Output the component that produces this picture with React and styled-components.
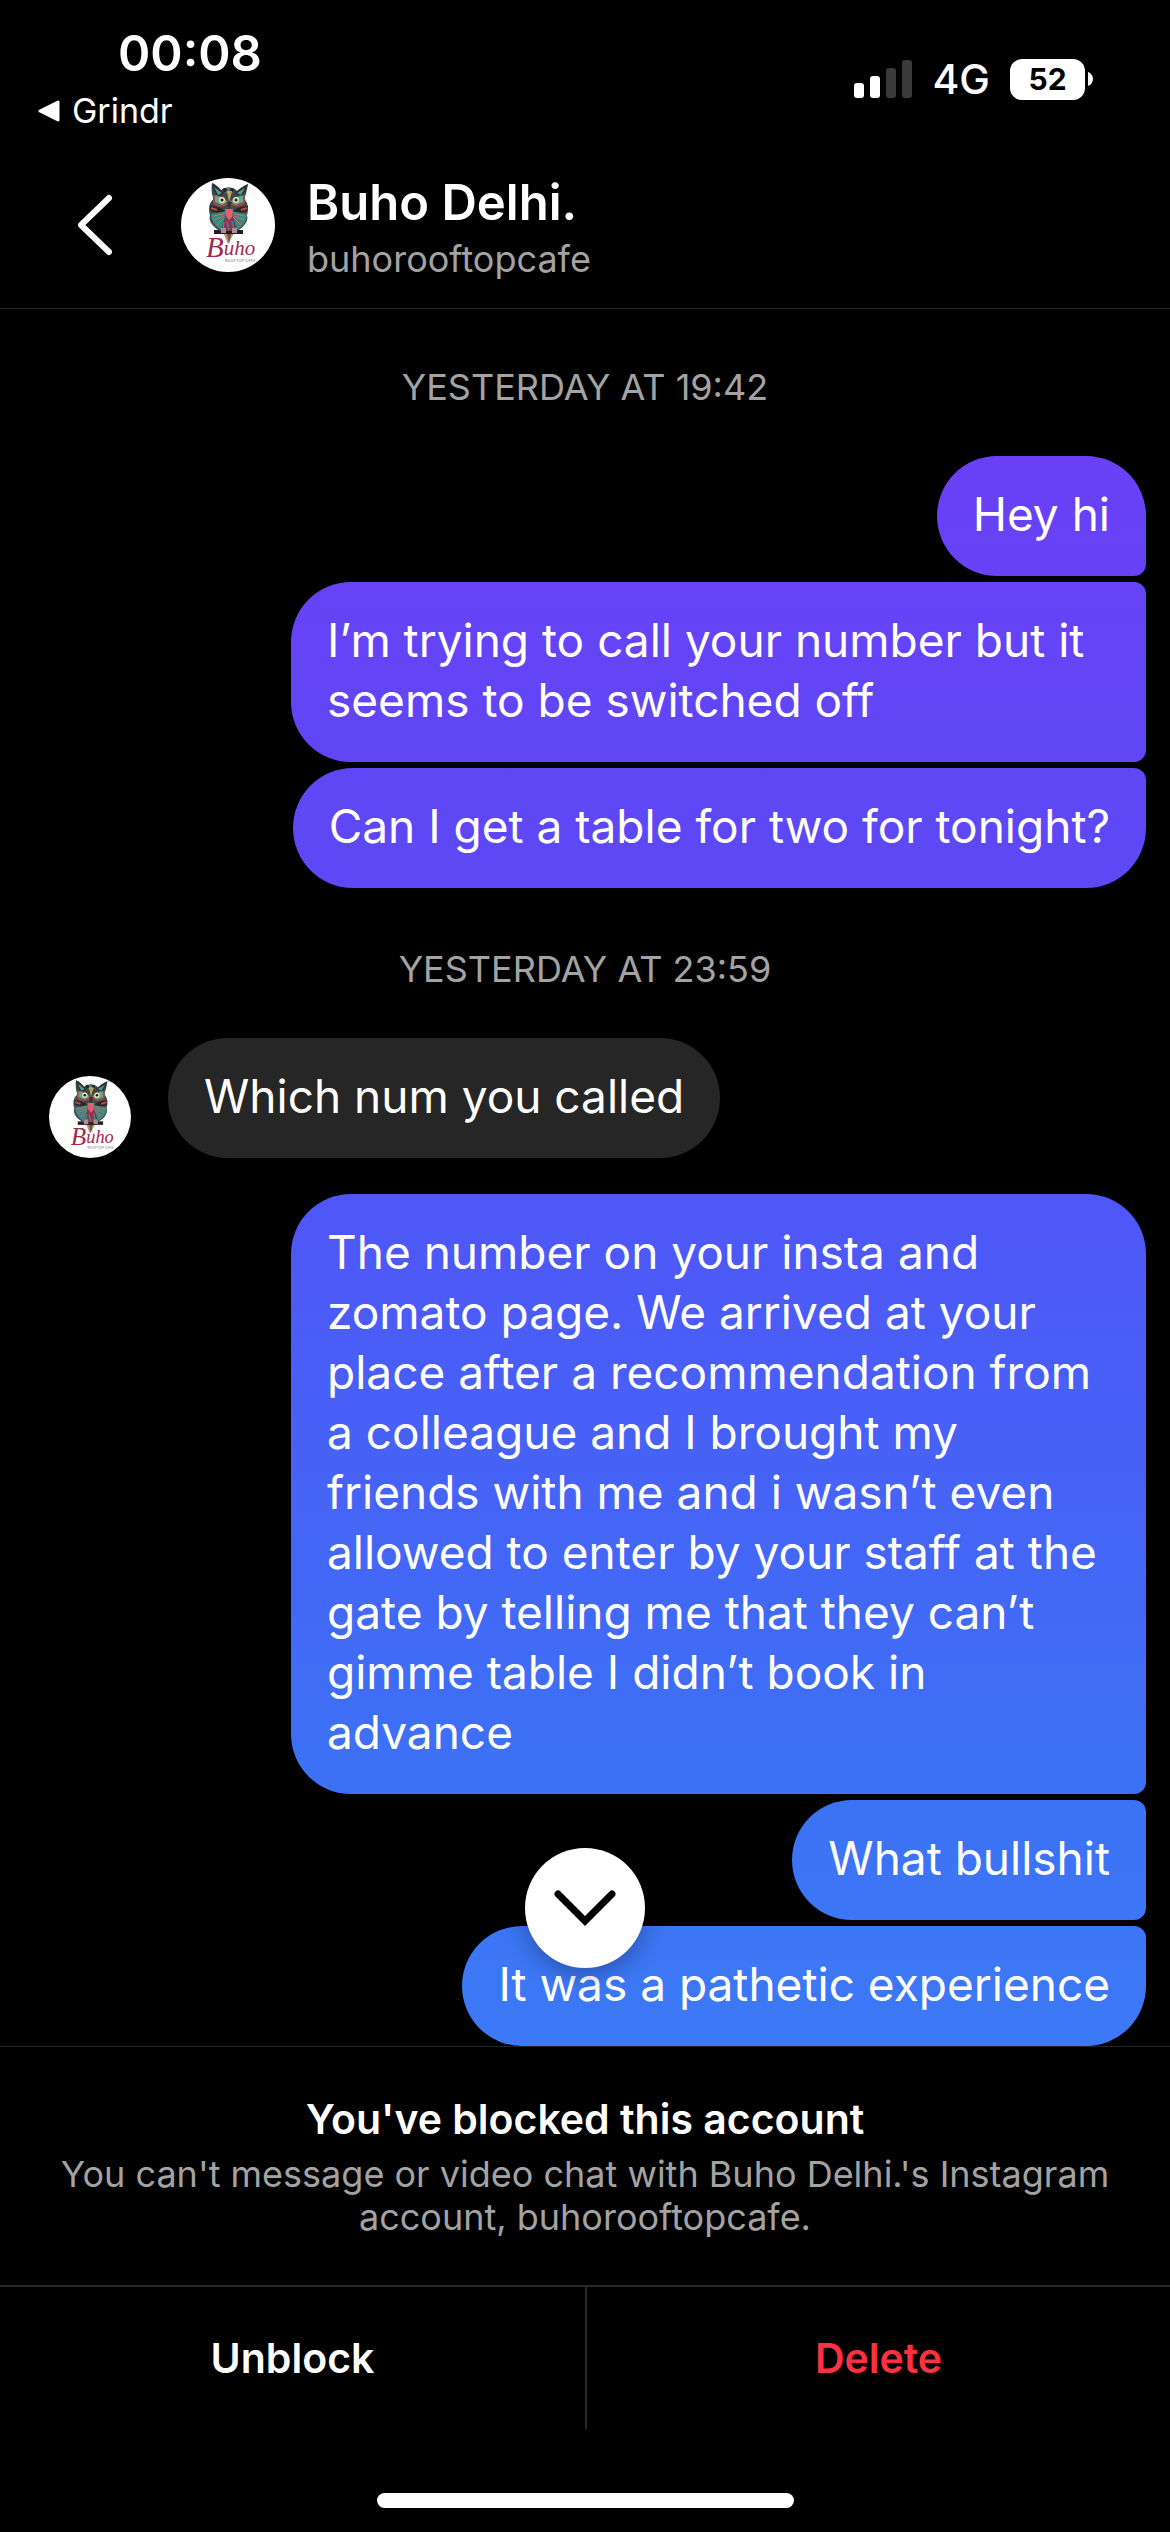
import React from "react";
import styled, { createGlobalStyle } from "styled-components";

const COLORS = {
  black: "#000",
  white: "#fff",
  muted: "#a3a3a3",
  line: "#262626",
  bubble: "#262626",
  dim: "#3a3a3a",
  danger: "#ff3040",
};

const MESSAGES = [
  {
    date: "YESTERDAY AT 19:42",
    groups: [
      {
        own: true,
        texts: [
          "Hey hi",
          "I’m trying to call your number but it seems to be switched off",
          "Can I get a table for two for tonight?",
        ],
      },
    ],
  },
  {
    date: "YESTERDAY AT 23:59",
    groups: [
      { own: false, texts: ["Which num you called"] },
      {
        own: true,
        texts: [
          "The number on your insta and zomato page. We arrived at your place after a recommendation from a colleague and I brought my friends with me and i wasn’t even allowed to enter by your staff at the gate by telling me that they can’t gimme table I didn’t book in\nadvance",
          "What bullshit",
          "It was a pathetic experience",
        ],
      },
    ],
  },
];

const OwlLogo = ({ size }) => (
  <svg width={size} height={size} viewBox="0 0 94 94" aria-hidden="true">
    <circle cx="47" cy="47" r="47" fill="#fff" />
    {/* tail and perch */}
    <path d="M41 52L47 66L55 52Z" fill="#b09a62" />
    <path d="M45 52L48 66L51 52Z" fill="#7a4a55" />
    <path d="M33 52H62V56H33Z" fill="#251c22" />
    {/* body */}
    <path
      d="M31 5C30 13 31 18 33 21C28 24 27 31 29 37C27 43 32 49 39 53H56C63 49 68 43 66 37C68 31 67 24 63 21C65 17 66 12 67 6C62 8 58 11 56 13C54 9 42 8 40 13C38 10 35 7 31 5Z"
      fill="#3b4a4c"
    />
    <path d="M31 5C32 12 34 16 38 19L43 15C39 11 36 7 31 5Z" fill="#2a3237" />
    <path d="M67 6C65 12 63 16 59 19L54 15C58 12 62 8 67 6Z" fill="#2a3237" />
    <path d="M33 9L37 17L41 15Z" fill="#4f9a90" />
    <path d="M64 10L60 17L56 15Z" fill="#4f9a90" />
    <path d="M42 12L48 9L54 12L48 18Z" fill="#5d8062" />
    <circle cx="44" cy="12" r="2" fill="#26212a" />
    <circle cx="51" cy="12" r="2" fill="#26212a" />
    <path d="M46 13L48 24L51 13Z" fill="#c2a45e" />
    <path d="M32 17C37 17 44 18 48 25C44 30 35 30 32 25Z" fill="#9a4a40" />
    <path d="M64 17C59 17 52 18 48 25C52 30 61 30 64 25Z" fill="#9a4a40" />
    <path d="M34 18C39 18 44 20 46 24L41 27L34 24Z" fill="#63a69a" />
    <path d="M62 18C57 18 52 20 50 24L55 27L62 24Z" fill="#63a69a" />
    <circle cx="41" cy="22" r="3" fill="#ece3b4" />
    <circle cx="55" cy="22" r="3" fill="#ece3b4" />
    <circle cx="41" cy="22" r="1.5" fill="#1a1a1f" />
    <circle cx="55" cy="22" r="1.5" fill="#1a1a1f" />
    <path d="M46 24L48 31L51 24Z" fill="#3b2b2b" />
    <path d="M29 28C34 28 41 29 44 34L36 35L30 33Z" fill="#2b2428" />
    <path d="M67 28C62 28 55 29 52 34L60 35L66 33Z" fill="#2b2428" />
    <path d="M30 30L36 32M66 30L60 32" stroke="#b4533f" strokeWidth="2" />
    <path d="M30 36L46 33L40 52C34 48 30 43 30 36Z" fill="#3f8580" />
    <path d="M66 36L50 33L56 52C62 48 66 43 66 36Z" fill="#3f8580" />
    <path
      d="M32 38L43 36M33 42L43 38M36 47L44 39M64 38L53 36M63 42L53 38M60 47L52 39"
      stroke="#bb7a5a"
      strokeWidth="1"
    />
    <path d="M41 53L44 39L48 35L52 39L55 53Z" fill="#8d3554" />
    <path d="M44 31H52L51 39L48 42L45 38Z" fill="#e0606f" />
    <path d="M46 44L48 52M51 43L53 51M43 44L42 51" stroke="#4f9a90" />
    <path d="M40 50H45V55H40ZM51 50H56V55H51Z" fill="#a98f93" />
    <text
      x="25"
      y="79"
      fill="#a3284c"
      fontFamily="'Liberation Serif', serif"
      fontStyle="italic"
      fontSize="29"
    >
      B
      <tspan y="77" fontSize="21">
        uho
      </tspan>
    </text>
    <text
      x="44"
      y="84"
      fill="#777"
      fontFamily="Inter, sans-serif"
      fontSize="4"
    >
      ROOFTOP CAFE
    </text>
  </svg>
);

const StatusBar = () => (
  <Status>
    <StatusLeft>
      <Time>00:08</Time>
      <ReturnLink href="#">
        <svg width="22" height="22" viewBox="0 0 22 22" aria-hidden="true">
          <path
            d="M2 11L20 2V20Z"
            fill="#fff"
            stroke="#fff"
            strokeWidth="3"
            strokeLinejoin="round"
          />
        </svg>
        Grindr
      </ReturnLink>
    </StatusLeft>
    <StatusRight>
      <svg width="58" height="38" viewBox="0 0 58 38" aria-hidden="true">
        <rect x="0" y="23" width="10" height="15" rx="3" fill={COLORS.white} />
        <rect x="16" y="16" width="10" height="22" rx="3" fill={COLORS.white} />
        <rect x="32" y="8" width="10" height="30" rx="3" fill={COLORS.dim} />
        <rect x="48" y="0" width="10" height="38" rx="3" fill={COLORS.dim} />
      </svg>
      <Network>4G</Network>
      <Battery>
        <BatteryLevel>52</BatteryLevel>
        <svg width="5" height="14" viewBox="0 0 5 14" aria-hidden="true">
          <path d="M0 0C3 1 5 4 5 7C5 10 3 13 0 14Z" fill="#fff" />
        </svg>
      </Battery>
    </StatusRight>
  </Status>
);

const App = () => {
  return (
    <>
      <GlobalStyle />
      <Page>
        <StatusBar />
        <Header>
          <IconButton aria-label="Back">
            <svg width="40" height="66" viewBox="0 0 40 66" fill="none">
              <path
                d="M34 6L6 33L34 60"
                stroke="#fff"
                strokeWidth="6"
                strokeLinecap="round"
                strokeLinejoin="round"
              />
            </svg>
          </IconButton>
          <OwlLogo size={94} />
          <Account>
            <Name>Buho Delhi.</Name>
            <Username>buhorooftopcafe</Username>
          </Account>
        </Header>

        <Thread>
          {MESSAGES.map(({ date, groups }) => (
            <Section key={date}>
              <DateLabel>{date}</DateLabel>
              {groups.map(({ own, texts }) => (
                <Group key={texts[0]} $own={own}>
                  {!own && <OwlLogo size={82} />}
                  <Bubbles $own={own}>
                    {texts.map((text) => (
                      <Bubble key={text} $own={own}>
                        {text}
                      </Bubble>
                    ))}
                  </Bubbles>
                </Group>
              ))}
            </Section>
          ))}
          <ScrollButton aria-label="Scroll to latest">
            <svg width="70" height="44" viewBox="0 0 70 44" fill="none">
              <path
                d="M8 8L35 35L62 8"
                stroke="#000"
                strokeWidth="7"
                strokeLinecap="round"
              />
            </svg>
          </ScrollButton>
        </Thread>

        <Footer>
          <Notice>
            <NoticeTitle>You've blocked this account</NoticeTitle>
            <NoticeText>
              You can't message or video chat with Buho Delhi.'s Instagram
              account, buhorooftopcafe.
            </NoticeText>
          </Notice>
          <Actions>
            <ActionButton>Unblock</ActionButton>
            <ActionButton $danger>Delete</ActionButton>
          </Actions>
          <HomeIndicator />
        </Footer>
      </Page>
    </>
  );
};

const GlobalStyle = createGlobalStyle`
  *, *::before, *::after {
    box-sizing: border-box;
  }
  body {
    margin: 0;
    background: ${COLORS.black};
    color: ${COLORS.white};
    font-family: Inter, "Liberation Sans", sans-serif;
  }
  h1, h2, p {
    margin: 0;
  }
  svg {
    display: block;
    flex-shrink: 0;
  }
`;

const Page = styled.div`
  display: flex;
  flex-direction: column;
  min-height: 100vh;
`;

const Status = styled.div`
  display: flex;
  justify-content: space-between;
  align-items: flex-start;
  padding: 24px 77px 0 38px;
`;

const StatusLeft = styled.div`
  display: flex;
  flex-direction: column;
`;

const Time = styled.span`
  padding-left: 80px;
  font-size: 49px;
  line-height: 60px;
  font-weight: 600;
`;

const ReturnLink = styled.a`
  display: flex;
  align-items: center;
  gap: 12px;
  color: ${COLORS.white};
  font-size: 34px;
  line-height: 54px;
  text-decoration: none;
`;

const StatusRight = styled.div`
  display: flex;
  align-items: center;
  padding-top: 33px;
`;

const Network = styled.span`
  padding: 0 20px;
  font-size: 41px;
  line-height: 44px;
  font-weight: 500;
`;

const Battery = styled.div`
  display: flex;
  align-items: center;
  gap: 3px;
`;

const BatteryLevel = styled.span`
  width: 75px;
  border-radius: 12px;
  background: ${COLORS.white};
  color: ${COLORS.black};
  font-size: 30px;
  line-height: 41px;
  font-weight: 700;
  text-align: center;
`;

const Header = styled.header`
  display: flex;
  align-items: center;
  padding: 31px 75px 27px;
  border-bottom: 1px solid ${COLORS.line};
`;

const UnstyledButton = styled.button`
  display: block;
  padding: 0;
  border: none;
  background: transparent;
  color: inherit;
  font-family: inherit;
  cursor: pointer;
`;

const IconButton = styled(UnstyledButton)`
  margin-right: 66px;
`;

const Account = styled.div`
  display: flex;
  flex-direction: column;
  gap: 4px;
  margin-left: 32px;
  padding-top: 4px;
`;

const Name = styled.h1`
  font-size: 49px;
  line-height: 60px;
  font-weight: 600;
`;

const Username = styled.p`
  color: ${COLORS.muted};
  font-size: 36px;
  line-height: 44px;
`;

const Thread = styled.main`
  position: relative;
  display: flex;
  flex-direction: column;
  flex: 1;
  gap: 59px;
  padding: 56px 24px 0;
`;

const Section = styled.section`
  display: flex;
  flex-direction: column;
  gap: 36px;
`;

const DateLabel = styled.p`
  padding-bottom: 11px;
  color: ${COLORS.muted};
  font-size: 36px;
  line-height: 44px;
  text-align: center;
`;

const Group = styled.div`
  display: flex;
  align-items: flex-end;
  justify-content: ${({ $own }) => ($own ? "flex-end" : "flex-start")};
  gap: 37px;
  padding-left: ${({ $own }) => ($own ? "0" : "25px")};
`;

const Bubbles = styled.div`
  display: flex;
  flex-direction: column;
  align-items: ${({ $own }) => ($own ? "flex-end" : "flex-start")};
  gap: 6px;
  max-width: ${({ $own }) => ($own ? "855px" : "800px")};
`;

const Bubble = styled.p`
  padding: 28px 36px 32px;
  border-radius: 60px;
  background: ${COLORS.bubble};
  font-size: 46px;
  line-height: 60px;
  white-space: pre-line;

  /* one gradient runs behind the whole window, the bubbles show parts of it */
  ${({ $own }) =>
    $own &&
    `
    background: linear-gradient(
      #6b3ff7 16%,
      #5c49f5 35%,
      #4e57f7 48%,
      #4367f6 62%,
      #3c72f5 71%,
      #3c7af6 82%
    ) fixed;

    &:not(:last-child) {
      border-bottom-right-radius: 12px;
    }
    &:not(:first-child) {
      border-top-right-radius: 12px;
    }
  `}
`;

const ScrollButton = styled(UnstyledButton)`
  position: absolute;
  bottom: 78px;
  left: 50%;
  display: flex;
  align-items: center;
  justify-content: center;
  width: 120px;
  height: 120px;
  margin-left: -60px;
  border-radius: 50%;
  background: ${COLORS.white};
  box-shadow: 0 6px 24px rgba(0, 0, 0, 0.3);
`;

const Footer = styled.footer`
  border-top: 1px solid ${COLORS.line};
`;

const Notice = styled.div`
  padding: 46px 60px;
  border-bottom: 2px solid ${COLORS.line};
  text-align: center;
`;

const NoticeTitle = styled.h2`
  margin-bottom: 8px;
  font-size: 41px;
  line-height: 52px;
  font-weight: 600;
`;

const NoticeText = styled.p`
  color: ${COLORS.muted};
  font-size: 36px;
  line-height: 43px;
`;

const Actions = styled.div`
  display: grid;
  grid-template-columns: 1fr 1fr;
`;

const ActionButton = styled(UnstyledButton)`
  height: 142px;
  color: ${({ $danger }) => ($danger ? COLORS.danger : COLORS.white)};
  font-size: 41px;
  font-weight: 600;

  & + & {
    border-left: 2px solid ${COLORS.line};
  }
`;

const HomeIndicator = styled.div`
  width: 417px;
  height: 15px;
  margin: 64px auto 24px;
  border-radius: 8px;
  background: ${COLORS.white};
`;

export default App;
